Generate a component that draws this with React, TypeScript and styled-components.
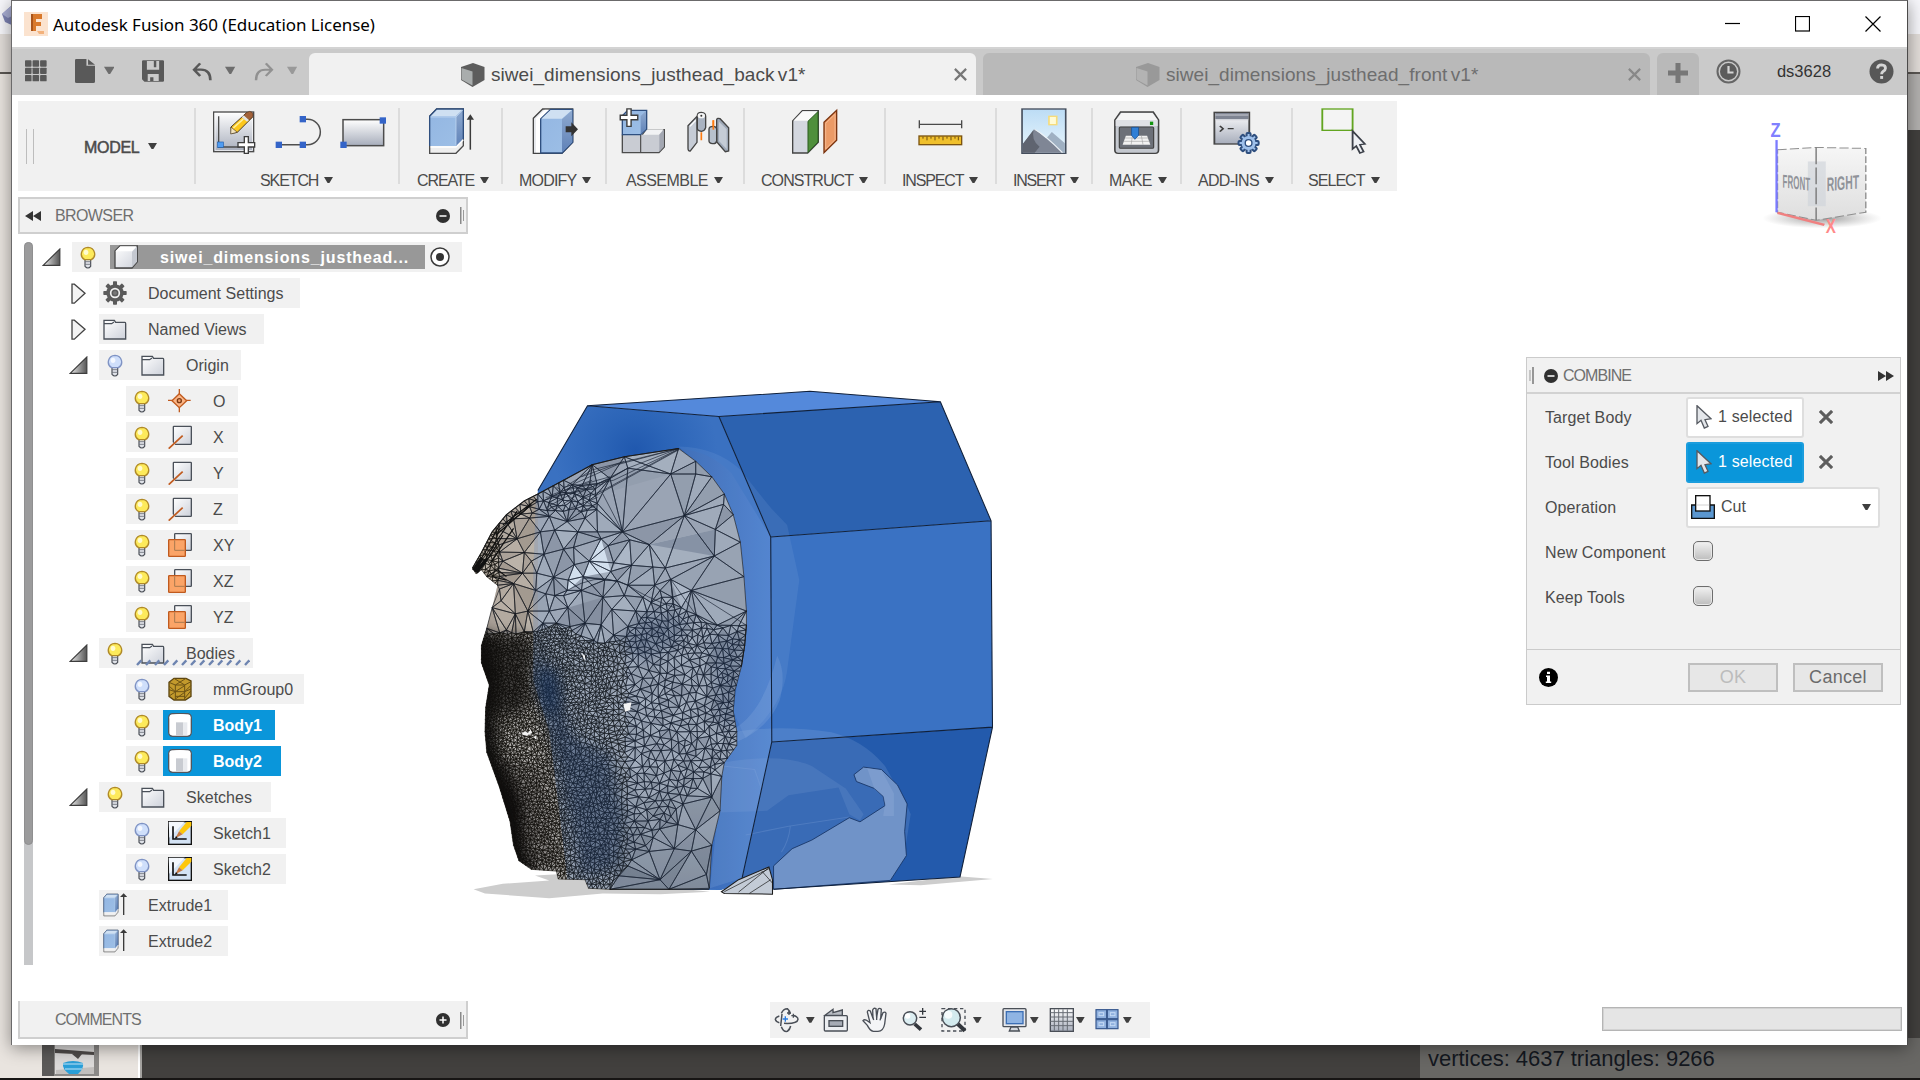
import React, { useMemo } from "react";
import styled, { createGlobalStyle, css } from "styled-components";

const Global = createGlobalStyle`
  * { box-sizing: border-box; }
  body { margin: 0; width: 1920px; height: 1080px; overflow: hidden;
    font-family: "Liberation Sans", Arial, sans-serif; font-size: 16px; color: #4b4b4b; }
  svg { display: block; flex: none; }
`;

/* ---------- desktop behind the window ---------- */
const Desktop = styled.div`
  position: relative; width: 1920px; height: 1080px; overflow: hidden;
  display: flex; flex-direction: column; background: #171514;
`;
const BackTitle = styled.div`
  height: 34px; background: #f7f7fb; padding: 6px 0 0 2px;
`;
const BackMenu = styled.div`height: 38px; background: #e2ddd9;`;
const BackRule = styled.div`height: 2px; background: #5c5854;`;
const BackBody = styled.div`height: 1004px; display: flex;`;
const BackSide = styled.div`
  width: 138px; background: #e9e4df; display: flex; flex-direction: column;
  justify-content: flex-end; padding-left: 41px;
`;
const BackDivider = styled.div`width: 4px; background: linear-gradient(90deg, #fff 50%, #a5a3a0 50%);`;
const BackView = styled.div`
  flex: 1; background: #42403e; display: flex; flex-direction: column; align-items: flex-end;
  justify-content: space-between;
`;
const BackStrip = styled.div`width: 100%; height: 56px; background: #b3b1af;`;
const Stats = styled.div`
  width: 500px; height: 40px; background: #686764; color: #14181f; padding: 9px 0 0 8px;
  font-size: 22px; line-height: 24px; letter-spacing: -0.02px; white-space: pre;
`;

/* ---------- window ---------- */
const Window = styled.div`
  position: absolute; left: 11px; top: 0; width: 1897px; height: 1045px; background: #fff;
  border: 1px solid #6b6a6b; border-bottom: 0; border-right-color: #4b4a4a;
  box-shadow: 0 3px 16px rgba(0, 0, 0, 0.42); display: flex; flex-direction: column;
`;
const TitleBar = styled.div`
  height: 46px; display: flex; align-items: center; padding: 0 26px 0 12px;
`;
const TitleText = styled.div`
  margin-left: 5px; flex: 1; font-family: "Noto Sans", "Open Sans", sans-serif; font-size: 17px;
  letter-spacing: -0.04px; color: #000; padding-top: 1px; white-space: pre;
`;
const Controls = styled.div`display: flex; gap: 55px;`;

const TabBar = styled.div`
  height: 48px; background: #cacaca; display: flex; align-items: flex-end;
  box-shadow: inset 0 2px 0 #d3d3d3;
`;
const QuickAccess = styled.div`
  width: 297px; height: 48px; display: flex; align-items: flex-start; padding: 12px 0 0 13px;
`;
const Shift = styled.div<{ $l: number }>`margin-left: ${(p) => p.$l}px;`;
const Tab = styled.div<{ $active?: boolean }>`
  width: 667px; height: 42px; border-radius: 6px 6px 0 0; display: flex; align-items: center;
  background: ${(p) => (p.$active ? "#f1f1f1" : "#b9b9b9")};
  color: ${(p) => (p.$active ? "#4b4b4b" : "#6e6e6e")};
  padding: 1px 9px 0 ${(p) => (p.$active ? 151 : 152)}px; margin-right: 7px;
`;
const TabTitle = styled.div`
  margin-left: 6px; flex: 1; font-size: 19px; letter-spacing: 0.05px; padding-top: 1px; white-space: pre;
  word-spacing: -2px;
`;
const NewTab = styled.div`
  width: 42px; height: 42px; border-radius: 6px 6px 0 0; background: #b9b9b9;
  display: grid; place-items: center; padding-bottom: 2px;
`;
const Account = styled.div`
  flex: 1; height: 48px; display: flex; align-items: center; padding: 0 13px 0 17px;
  justify-content: space-between; color: #333; font-size: 16.5px;
  span { margin-left: -2px; }
`;

const Ribbon = styled.div`
  width: 1379px; height: 90px; margin: 6px 0 0 6px; background: #f1f1f1; display: flex;
`;
const Workspace = styled.div`
  width: 176px; display: flex; align-items: flex-start; padding: 28px 0 0 8px;
`;
const Grip = styled.div`width: 8px; height: 35px; border: solid #bdbdbd; border-width: 0 1.5px;`;
const ModelLabel = styled.div`
  margin: 9px 9px 0 50px; -webkit-text-stroke: 0.5px #4b4b4b; letter-spacing: -0.3px; line-height: 20px;
`;
const ModelCaret = styled.div`margin-top: 14px;`;
const Group = styled.div<{ $w: number }>`
  width: ${(p) => p.$w}px; padding-top: 4px;
  background: linear-gradient(#dcdcdc, #dcdcdc) 0 7px / 2px 76px no-repeat;
`;
const IconRow = styled.div<{ $l: number; $gap?: number }>`
  height: 52px; padding-left: ${(p) => p.$l}px; display: flex; gap: ${(p) => p.$gap || 0}px;
`;
const GroupLabel = styled.div<{ $l: number; $sp: number }>`
  margin: 14px 0 0 ${(p) => p.$l}px; display: flex; align-items: center; gap: 6px;
  line-height: 20px; letter-spacing: ${(p) => p.$sp}px; white-space: pre;
  svg { margin-top: -3px; }
`;

const Canvas = styled.div`
  position: relative; height: 854px; display: flex; justify-content: space-between;
  padding: 6px 6px 0 6px;
`;
const ModelLayer = styled.div`position: absolute; left: 448px; top: 179px;`;
const CubeLayer = styled.div`position: absolute; left: 1748px; top: -71px; svg { overflow: visible; }`;

const Left = styled.div`width: 450px; display: flex; flex-direction: column;`;
const PanelBar = styled.div<{ $h: number; $open?: boolean }>`
  height: ${(p) => p.$h}px; background: #f1f1f1; border: 2px solid #cfcfcf; display: flex;
  align-items: center; padding: 0 2px 0 5px; color: #6f6f6f;
  ${(p) => p.$open && css`border-top: 0; padding-top: 2px;`}
`;
const PanelTitle = styled.div<{ $l: number; $sp: number }>`
  flex: 1; margin-left: ${(p) => p.$l}px; letter-spacing: ${(p) => p.$sp}px;
`;
const Handle = styled.div`
  width: 4px; height: 17px; margin-left: 10px;
  background: linear-gradient(#8a8a8a, #8a8a8a) 0 0 / 1.5px 17px no-repeat,
    linear-gradient(#9a9a9a, #9a9a9a) 3px 3px / 1px 11px no-repeat;
`;
const TreeArea = styled.div`height: 767px; display: flex; padding: 8px 0 0 6px;`;
const Track = styled.div`width: 9px; height: 723px; background: #c6c7c9; border-radius: 5px 5px 0 0;`;
const Thumb = styled.div`height: 603px; background: #9b9b9c; border-radius: 5px; border: 1px solid #8f8f90;`;
const Tree = styled.div`margin-left: 10px; display: flex; flex-direction: column; gap: 6px;`;
const Row = styled.div<{ $level: number }>`
  height: 30px; display: flex; align-items: center; padding-left: ${(p) => p.$level * 27}px;
`;
const Slot = styled.div`width: 29px; margin-left: -1px; padding-right: 1px; flex: none; box-sizing: content-box;`;
const Item = styled.div<{ $w: number }>`
  width: ${(p) => p.$w}px; height: 30px; background: #f1f1f1; display: flex; align-items: center;
`;
const BulbSlot = styled.div`width: 37px; padding-left: 8px;`;
const Entry = styled.div<{ $kind?: "blue" | "gray"; $pad: number }>`
  flex: 1; height: 30px; display: flex; align-items: center; gap: 21px; padding-left: ${(p) => p.$pad}px;
  white-space: pre; letter-spacing: 0.02px;
  span { padding-top: 1px; }
  ${(p) => p.$kind && css`color: #fff; font-weight: bold;`}
  ${(p) => p.$kind === "blue" && css`background: #0a96da;`}
  ${(p) => p.$kind === "gray" && css`
    background: #989898; height: 24px; flex: none; width: 315px; margin: 0 5px 0 1px; gap: 22px;
    letter-spacing: 0.86px;
  `}
`;
const Hatch = styled.div`
  position: absolute; left: 37px; top: 21px; width: 114px; height: 7px;
  svg { width: 114px; height: 7px; }
`;
const Marked = styled.div`position: relative;`;

const NavBar = styled.div`
  position: absolute; left: 758px; top: 811px; width: 380px; height: 36px; background: #f1f1f1;
  display: flex; padding-left: 4px;
`;
const Right = styled.div`width: 375px; display: flex; flex-direction: column; align-items: flex-end;`;
const Dialog = styled.div`
  width: 375px; height: 348px; margin-top: 160px; background: #f1f1f1; border: 1.5px solid #cbcbcb;
  display: flex; flex-direction: column;
`;
const DialogHead = styled.div`
  height: 36px; border-bottom: 2px solid #d2d2d2; display: flex; align-items: center; padding: 1px 6px 0 2px;
  color: #6f6f6f;
`;
const Form = styled.div`flex: 1; padding: 0 0 0 18px;`;
const Field = styled.div`height: 45px; display: flex; align-items: center; padding-top: 1px;`;
const FieldLabel = styled.div`width: 141px; white-space: pre; letter-spacing: 0.1px; padding-top: 1px;`;
const Picker = styled.div<{ $on?: boolean }>`
  width: 118px; height: 41px; margin-right: 15px; border: 2px solid ${(p) => (p.$on ? "#1b9ddd" : "#dedede")};
  border-radius: 3px; background: ${(p) => (p.$on ? "#0a96da" : "#fff")};
  color: ${(p) => (p.$on ? "#fff" : "#4b4b4b")};
  display: flex; align-items: center; padding-left: 8px; gap: 6px; white-space: pre; letter-spacing: 0.15px;
`;
const Select = styled.div`
  width: 194px; height: 41px; border: 2px solid #dedede; border-radius: 3px; background: #fff;
  display: flex; align-items: center; padding: 0 7px 0 3px;
`;
const SelectText = styled.div`flex: 1; margin-left: 6px;`;
const Check = styled.div`
  width: 20px; height: 20px; margin: -2px 0 0 7px; border: 1.5px solid #6d6d6d; border-radius: 5px;
  background: linear-gradient(#f2f2f2, #bdbdbd); box-shadow: inset 0 0 0 1px #e8e8e8;
`;
const DialogFoot = styled.div`
  height: 55px; border-top: 1.5px solid #cbcbcb; display: flex; align-items: center; padding: 0 17px 0 12px;
`;
const Button = styled.div<{ $off?: boolean }>`
  width: 90px; height: 29px; border: 2px solid #bfbfbf; background: #e7e7e7; display: grid; place-items: center;
  font-size: 18px; letter-spacing: 0.3px; line-height: 20px; color: ${(p) => (p.$off ? "#bcbcbc" : "#6b6b6b")};
`;
const FootGap = styled.div<{ $w: number }>`width: ${(p) => p.$w}px;`;
const Progress = styled.div`
  width: 300px; height: 24px; margin: 302px -1px 0 0; background: #e5e5e5; border: 1px solid #b5b5b5;
  box-shadow: inset 0 0 0 1px #d2d2d2;
`;

/* ---------- drawings ---------- */
type GProps = { x: number; y: number; w: number; h: number; k?: number; children: React.ReactNode };
/** A glyph whose artboard has k units per pixel across and 3 per pixel down. */
const Glyph = ({ x, y, w, h, k = 3, children }: GProps) => (
  <svg width={w / k} height={h / 3} viewBox={`${x} ${y} ${w} ${h}`} preserveAspectRatio="none">
    {children}
  </svg>
);

const Caret = ({ color = "#3f3f3f", w = 9, h = 6 }) => (
  <svg width={w} height={h} viewBox="0 0 10 7" preserveAspectRatio="none">
    <path d="M0 0H10L6 7H4Z" fill={color} />
  </svg>
);

const Defs = () => (
  <svg width="0" height="0" style={{ position: "absolute" }}>
    <defs>
      <linearGradient id="steel" x1="0" y1="0" x2="0" y2="1">
        <stop offset="0" stopColor="#fff" /><stop offset="1" stopColor="#a7adbb" />
      </linearGradient>
      <linearGradient id="light" x1="0" y1="0" x2="1" y2="1">
        <stop offset="0" stopColor="#fff" /><stop offset="1" stopColor="#cdd1da" />
      </linearGradient>
      <linearGradient id="blue" x1="0" y1="0" x2="1" y2="1">
        <stop offset="0" stopColor="#93b6e2" /><stop offset="1" stopColor="#9dbfe6" />
      </linearGradient>
      <linearGradient id="side" x1="0" y1="0" x2="0" y2="1">
        <stop offset="0" stopColor="#8faad0" /><stop offset="1" stopColor="#5f82b8" />
      </linearGradient>
      <linearGradient id="tri" x1="0" y1="0" x2="1" y2="0">
        <stop offset="0" stopColor="#eee" /><stop offset="1" stopColor="#555" />
      </linearGradient>
      <linearGradient id="sky" x1="0" y1="0" x2="0" y2="1">
        <stop offset="0" stopColor="#bcdcf5" /><stop offset="1" stopColor="#e9f6fd" />
      </linearGradient>
    </defs>
  </svg>
);

const Pane = ({ faded }: { faded?: boolean }) => (
  <svg width="25" height="24" viewBox="0 0 25 24">
    <path d="M1 4L13 0 24.500 4V17L12.500 24 1 17Z" fill={faded ? "#999" : "#5d5d5d"} />
    <path d="M1.500 5L12.500 8.500V22.500L1.500 16.500Z" fill={faded ? "#b3b3b3" : "#a9adad"} />
  </svg>
);
const Close = ({ s = 13, c = "#777", w = 2 }) => (
  <svg width={s} height={s} viewBox="0 0 12 12">
    <path d="M.8.8L11.2 11.2M11.2.8L.8 11.2" stroke={c} strokeWidth={w} fill="none" />
  </svg>
);

const QuickIcons = () => {
  const c = "#595959";
  return (
    <QuickAccess>
      <Glyph k={2.45} x={62} y={177} w={53} h={73}>
        {[0, 1, 2].map((r) => [0, 1, 2].map((q) => (
          <rect key={`${r}${q}`} x={62 + q * 18.5} y={181 + r * 22} width="16" height="19" rx="2" fill={c} />
        )))}
      </Glyph>
      <Shift $l={28}>
        <Glyph k={2.45} x={183} y={177} w={50} h={73}>
          <path d="M186 177H211V197H232V245Q232 249 228 249H187Q183 249 183 245V181Q183 177 186 177ZM215 178L232 194H215Z" fill={c} />
        </Glyph>
      </Shift>
      <Shift $l={8.5}><Glyph k={2.45} x={254} y={177} w={26} h={73}><path d="M254 200H280L269 222H265Z" fill="#6d6d6d" /></Glyph></Shift>
      <Shift $l={27.5}>
        <Glyph k={2.45} x={348} y={177} w={54} h={73}>
          <path fillRule="evenodd" d="M351 181H399Q402 181 402 184V242Q402 245 399 245H354L348 238V184Q348 181 351 181ZM360 183V209H390V183H383V202H377V183ZM362 222V243H368V232H376V243H389V222Z" fill={c} />
        </Glyph>
      </Shift>
      <Shift $l={28}>
        <Glyph k={2.45} x={470} y={177} w={50} h={73}>
          <path d="M490 190L475 209L490 228M476 209H492Q515 209 515 241" fill="none" stroke={c} strokeWidth="6.5" />
        </Glyph>
      </Shift>
      <Shift $l={13}><Glyph k={2.45} x={552} y={177} w={26} h={73}><path d="M552 200H577L567 222H563Z" fill="#6d6d6d" /></Glyph></Shift>
      <Shift $l={18.5}>
        <Glyph k={2.45} x={623} y={177} w={50} h={73}>
          <path d="M652 190L667 209L652 228M667 209H650Q628 209 628 241" fill="none" stroke="#919191" strokeWidth="6" />
        </Glyph>
      </Shift>
      <Shift $l={12}><Glyph k={2.45} x={702} y={177} w={26} h={73}><path d="M702 200H727L717 222H713Z" fill="#999" /></Glyph></Shift>
    </QuickAccess>
  );
};

const plus = (x: number, y: number, s = 1) => (
  <path transform={`translate(${x} ${y}) scale(${s})`} d="M-6-25H6V-7H25V6H6V25H-6V6H-25V-7H-6Z" fill="#fff" stroke="#3d3d3d" strokeWidth="4" />
);
const sq = (x: number, y: number) => <rect x={x - 9} y={y - 9} width="19" height="19" fill="#3464c8" />;

const SketchIcon = () => (
  <Glyph x={96} y={30} w={134} h={156}>
    <rect x="101" y="51" width="120" height="119" fill="url(#steel)" stroke="#4c4c4c" strokeWidth="4" />
    <rect x="105" y="55" width="112" height="111" fill="none" stroke="#fff" strokeWidth="2" />
    <path d="M116 64V156H180" fill="none" stroke="#4c4c4c" strokeWidth="4" />
    <rect x="113" y="141" width="17" height="16" fill="#4f9cf2" stroke="#1f5fb0" strokeWidth="2" />
    <path d="M153 96L200 53L217 67L172 112L154 115Z" fill="#fdc81c" stroke="#4c3a20" strokeWidth="3" />
    <path d="M200 53Q210 46 216 52Q222 60 217 67L207 75L191 61Z" fill="#a3623a" stroke="#5b3a24" strokeWidth="2" />
    <path d="M191 61L207 75L201 80L185 67Z" fill="#e3e3e3" />
    <path d="M153 96L172 112L152 117Z" fill="#f1e2bd" stroke="#4c3a20" strokeWidth="2" />
    <path d="M160 99L190 72" stroke="#fff0a0" strokeWidth="5" />
    {plus(199, 150)}
  </Glyph>
);
const ArcIcon = () => (
  <Glyph x={286} y={30} w={142} h={156}>
    <path d="M297 149H384A38 38 0 0 0 384 73H370" fill="none" stroke="#4f4f4f" strokeWidth="4.5" />
    {sq(297, 149)}{sq(369, 149)}{sq(369, 72)}
  </Glyph>
);
const RectIcon = () => (
  <Glyph x={480} y={30} w={138} h={156}>
    <rect x="489" y="74" width="122" height="78" fill="url(#steel)" stroke="#4c4c4c" strokeWidth="4.5" />
    {sq(490, 149)}{sq(608, 76)}
  </Glyph>
);
const ExtrudeShape = () => (
  <>
    <path d="M749 64L770 42H850V152L828 175H749Z" fill="#eee" stroke="#4c4c4c" strokeWidth="4" />
    <path d="M749 64L770 42H850V130L828 153H749Z" fill="url(#blue)" />
    <path d="M749 64L770 42H850L828 64Z" fill="#cfe0f2" />
    <path d="M828 64L850 42V132L828 155Z" fill="url(#side)" />
    <path d="M752 156H828L850 134" fill="none" stroke="#fff" strokeWidth="4" />
    <path d="M749 153V64L770 42H850V132" fill="none" stroke="#2f4f7f" strokeWidth="4" />
    <path d="M752 66H828V150M828 66L848 45" fill="none" stroke="#bfd6f0" strokeWidth="2.5" />
  </>
);
const CreateIcon = () => (
  <Glyph x={744} y={30} w={142} h={156}>
    <ExtrudeShape />
    <path d="M871 164V64" stroke="#3b3b3b" strokeWidth="4.5" />
    <path d="M860 74L871 58L882 74Z" fill="#3b3b3b" />
  </Glyph>
);
const ModifyIcon = () => (
  <Glyph x={1056} y={30} w={144} h={156}>
    <path d="M1060 70L1088 42H1178V142L1146 175H1060Z" fill="#e8eaee" stroke="#444" strokeWidth="4" />
    <path d="M1068 70V172H1080V72L1106 44H1094Z" fill="#fff" />
    <path d="M1082 72L1112 43H1178V142L1146 174H1082Z" fill="url(#blue)" stroke="#2f4f7f" strokeWidth="4" />
    <path d="M1084 71L1112 45H1176L1146 71Z" fill="#cfe0f2" />
    <path d="M1146 73L1177 45V141L1146 172Z" fill="url(#side)" />
    <path d="M1157 94H1174V82L1194 103L1174 124V112H1157Z" fill="#333" />
  </Glyph>
);
const ComponentIcon = () => (
  <Glyph x={116} y={30} w={142} h={156}>
    <path d="M126 120L140 104H252V156L236 173H126Z" fill="#c9ccd3" stroke="#4c4c4c" strokeWidth="4" />
    <path d="M181 121L199 103H250L236 119H183Z" fill="#f1f2f4" />
    <path d="M237 119L250 104V156L237 170Z" fill="#a3a7b2" />
    <path d="M181 120V172M186 119L199 102" stroke="#4c4c4c" strokeWidth="3.5" />
    <path d="M126 62L142 46H199V102L181 119H126Z" fill="url(#blue)" stroke="#2f4f7f" strokeWidth="4" />
    <path d="M181 63L197 48V101L181 117Z" fill="url(#side)" />
    {plus(146, 68, 1.05)}
  </Glyph>
);
const JointIcon = () => (
  <Glyph x={318} y={30} w={134} h={156}>
    <path d="M324 92L351 64V142L331 168Q324 169 324 160Z" fill="#c6ccd6" stroke="#444" strokeWidth="4" />
    <path d="M352 62Q352 52 364 52Q377 53 377 64V98Q374 108 364 109Q352 108 352 100Z" fill="#aab3c1" stroke="#444" strokeWidth="4" />
    <ellipse cx="364" cy="62" rx="11" ry="8" fill="#f5f5f5" /><circle cx="364" cy="62" r="3" fill="#333" />
    <path d="M330 94L347 76" stroke="#fff" strokeWidth="4" />
    <path d="M364 112V136M400 76V104" stroke="#ff7b10" strokeWidth="5" />
    <path d="M410 74Q412 68 420 71L446 98V168L436 170L410 140Z" fill="#9fa9b8" stroke="#444" strokeWidth="4" />
    <path d="M417 80L440 103V162L417 138Z" fill="#c5ccd6" />
    <path d="M387 102Q388 94 399 94Q410 95 410 103V138Q408 147 398 146Q387 145 387 138Z" fill="#b8c1cd" stroke="#444" strokeWidth="4" />
    <path d="M400 76V104" stroke="#ff7b10" strokeWidth="5" />
  </Glyph>
);
const ConstructIcon = () => (
  <Glyph x={634} y={30} w={142} h={156}>
    <path d="M639 78L668 47H716V142L684 174H639Z" fill="#d3d7df" stroke="#444" strokeWidth="4" />
    <path d="M641 77L669 49H714L685 77Z" fill="#fafafa" />
    <path d="M685 79L715 50V141L685 172Z" fill="#4f8f3c" stroke="#2c5e20" strokeWidth="3" />
    <path d="M733 82L771 46V136L733 173Z" fill="#eb9a66" stroke="#7b3410" strokeWidth="4" />
    <path d="M738 85L766 58V134L738 162Z" fill="none" stroke="#f6bd96" strokeWidth="2.5" />
  </Glyph>
);
const InspectIcon = () => (
  <Glyph x={1010} y={30} w={142} h={156}>
    <path d="M1017 76V100M1144 76V100M1017 88H1144" stroke="#4a4a4a" strokeWidth="4" />
    <rect x="1016" y="123" width="128" height="26" fill="#f0c02c" stroke="#7c5410" strokeWidth="4" />
    {[1028, 1040, 1052, 1064, 1076, 1088, 1100, 1112, 1124, 1134].map((v, i) => (
      <path key={v} d={`M${v} 125V${i % 2 ? 136 : 131}`} stroke="#6e4c10" strokeWidth="3" />
    ))}
  </Glyph>
);
const InsertIcon = () => (
  <Glyph k={2.45} x={1030} y={315} w={118} h={156}>
    <rect x="1035" y="327" width="107" height="133" fill="url(#sky)" stroke="#444d5c" strokeWidth="4" />
    <rect x="1101" y="349" width="19" height="25" fill="#fffbd6" stroke="#f7dc7a" strokeWidth="4" />
    <path d="M1084 430L1108 396L1140 430V458H1084Z" fill="#9fb0c2" />
    <path d="M1037 432L1066 388Q1078 398 1134 458H1037Z" fill="#7f8695" />
    <path d="M1037 432L1064 388Q1056 420 1078 440L1066 458H1037Z" fill="#5f6470" />
    <path d="M1066 388Q1092 405 1134 458" stroke="#eef2f6" strokeWidth="3" fill="none" />
  </Glyph>
);
const MakeIcon = () => (
  <Glyph k={2.45} x={1256} y={315} w={120} h={156}>
    <path d="M1263 360L1277 336H1357L1370 360V450Q1370 460 1362 460H1271Q1263 460 1263 450Z" fill="#c4c8cf" stroke="#444" strokeWidth="4" />
    <path d="M1266 360L1279 339H1355L1368 360Z" fill="#f5f5f5" />
    <rect x="1265" y="360" width="103" height="18" fill="#dfe1e5" />
    <rect x="1349" y="365" width="8" height="10" fill="#12940f" />
    <rect x="1274" y="381" width="84" height="64" rx="3" fill="#6c7078" stroke="#444" strokeWidth="3" />
    <path d="M1290 407H1342L1350 434H1282Z" fill="#f2f2f2" /><path d="M1288 414H1345M1285 424H1348M1306 407L1303 434M1328 407L1332 434" stroke="#999" strokeWidth="1.5" />
    <path d="M1304 382H1321V406L1312 418L1304 406Z" fill="#2f7fd6" stroke="#184f93" strokeWidth="2" />
  </Glyph>
);
const AddinsIcon = () => (
  <Glyph k={2.178} x={28} y={315} w={104} h={156}>
    <rect x="31" y="337" width="76" height="95" fill="url(#steel)" stroke="#454545" strokeWidth="4" />
    <rect x="33" y="339" width="72" height="18" fill="#7e8492" /><path d="M33 345H105M33 359H105" stroke="#c9ccd4" strokeWidth="3" />
    <path d="M43 378L50 386L43 395M60 386H73" stroke="#3d3d3d" strokeWidth="4" fill="none" />
    <g transform="translate(105.500 429) scale(.73 1)">
      {[0, 45, 90, 135].map((a) => <rect key={a} x="-6" y="-30" width="12" height="60" rx="3" transform={`rotate(${a})`} fill="#9fc0ea" stroke="#2f4f7f" strokeWidth="6" />)}
      <circle r="21" fill="#9fc0ea" /><circle r="10" fill="#fff" stroke="#2f4f7f" strokeWidth="4" />
    </g>
  </Glyph>
);
const SelectIcon = () => (
  <Glyph k={2.178} x={262} y={315} w={104} h={156}>
    <rect x="267" y="327" width="66" height="64" fill="#f4f4f4" stroke="#62a520" strokeWidth="4" />
    <path d="M333 393V447L341 438L349 459L357 455L349 434L360 432Z" fill="#eef0f4" stroke="#3b3f48" strokeWidth="4" />
  </Glyph>
);

type G = { label: string; w: number; il: number; ll: number; sp: number; gap?: number; icons: React.ReactNode };
const groups: G[] = [
  { label: "SKETCH", w: 204, il: 18, ll: 66, sp: -1.1, gap: 18, icons: <><SketchIcon /><ArcIcon /><RectIcon /></> },
  { label: "CREATE", w: 103, il: 30, ll: 19, sp: -1.1, icons: <CreateIcon /> },
  { label: "MODIFY", w: 104, il: 31, ll: 18, sp: -0.8, icons: <ModifyIcon /> },
  { label: "ASSEMBLE", w: 138, il: 14, ll: 21, sp: -0.55, gap: 20, icons: <><ComponentIcon /><JointIcon /></> },
  { label: "CONSTRUCT", w: 141, il: 48, ll: 18, sp: -0.93, icons: <ConstructIcon /> },
  { label: "INSPECT", w: 111, il: 33, ll: 18, sp: -1.15, icons: <InspectIcon /> },
  { label: "INSERT", w: 96, il: 25, ll: 18, sp: -1.2, icons: <InsertIcon /> },
  { label: "MAKE", w: 89, il: 21, ll: 18, sp: -0.6, icons: <MakeIcon /> },
  { label: "ADD-INS", w: 111, il: 33, ll: 18, sp: -0.7, icons: <AddinsIcon /> },
  { label: "SELECT", w: 106, il: 29, ll: 17, sp: -0.95, icons: <SelectIcon /> },
];

/* ---------- tree icons ---------- */
const Bulb = ({ on }: { on: boolean }) => (
  <Glyph x={240} y={164} w={48} h={72}>
    <path d="M255 205H272V228Q264 238 255 228Z" fill="#dfe2e8" stroke="#4c5058" strokeWidth="3.5" />
    <path d="M255 214H272M255 222H272" stroke="#6c7078" strokeWidth="2.5" />
    <path d="M264 171A21 20 0 0 1 274 208H254A21 20 0 0 1 264 171Z" fill={on ? "#fdea5b" : "#cfdffb"} stroke={on ? "#b08a28" : "#7f93c4"} strokeWidth="4" />
    <ellipse cx="258" cy="186" rx="7" ry="8" fill={on ? "#fffbd0" : "#f4f8ff"} />
  </Glyph>
);
const I = ({ children }: { children: React.ReactNode }) => <svg width="24" height="24" viewBox="0 0 72 72">{children}</svg>;
const icons: Record<string, React.ReactNode> = {
  cube: <I><path d="M3 18L18 3H70V50L54 69H3Z" fill="url(#light)" stroke="#4a4a4a" strokeWidth="4" /><path d="M54 20L69 5V50L54 67Z" fill="#c4c8d0" /><path d="M4 19L19 4H68L54 19Z" fill="#fff" /></I>,
  gear: <I><g transform="translate(36 36)">{[0, 45, 90, 135].map((a) => <rect key={a} x="-6" y="-35" width="12" height="70" rx="2" transform={`rotate(${a})`} fill="#5a5a5a" />)}<circle r="26" fill="#5a5a5a" /><circle r="13" fill="#5a5a5a" stroke="#f1f1f1" strokeWidth="5" /><circle r="6" fill="#777" /></g></I>,
  folder: <I><path d="M3 10H34L38 16H66Q68 16 68 20V66H3Z" fill="url(#light)" stroke="#4a5059" strokeWidth="4" /><path d="M3 20H26L33 15" stroke="#4a5059" strokeWidth="3.500" fill="none" /></I>,
  point: <I><path d="M34 0V70M0 34H68" stroke="#c05a1e" strokeWidth="4" /><path d="M34 14L56 35L34 56L12 35Z" fill="#fbb586" stroke="#c05a1e" strokeWidth="4" /><circle cx="34" cy="35" r="6" fill="#f6a06a" stroke="#7c3a14" strokeWidth="4" /></I>,
  axis: <I><rect x="16" y="4" width="54" height="54" rx="2" fill="url(#light)" stroke="#4a5059" strokeWidth="4" /><path d="M2 70L18 55" stroke="#f1f1f1" strokeWidth="11" /><path d="M2 71L44 32" stroke="#c05a1e" strokeWidth="5" /></I>,
  plane: <I><rect x="20" y="2" width="50" height="50" rx="2" fill="url(#light)" stroke="#4a5059" strokeWidth="4" /><rect x="2" y="20" width="50" height="50" rx="2" fill="#fba467" stroke="#c05a1e" strokeWidth="4" /><path d="M20 22V52H50" stroke="#a8794f" strokeWidth="3" fill="none" /></I>,
  mesh: <I><path d="M3 16L18 4H54L69 12V58L52 69H18L3 58Z" fill="#c39a2c" stroke="#5c4510" strokeWidth="4" /><path d="M3 16L22 24H50L69 14M22 24V68M50 24V68M3 38L22 44H50L69 36M22 58H50M4 28L22 44M22 44L50 26M50 44L68 26M22 66L50 46M5 56L20 46M50 64L68 42M18 4L50 24M54 4L22 24" stroke="#6c5214" strokeWidth="3" fill="none" /></I>,
  body: <I><rect x="2" y="2" width="68" height="68" rx="12" fill="#fff" stroke="#53565c" strokeWidth="4" /><path d="M24 28H46V68H24Z" fill="#c8cbd1" /><path d="M46 28H58V66H46Z" fill="#e8eaee" /><path d="M4 14Q10 24 24 26H48Q62 24 68 14Q60 3 36 3T4 14Z" fill="#fff" /></I>,
  sketch: <I><rect x="2" y="2" width="68" height="68" fill="#d4e3f5" stroke="#111" strokeWidth="4" /><path d="M2 2H50L4 50Z" fill="#f4f8fd" /><path d="M15 16V54H56" fill="none" stroke="#111" strokeWidth="5" /><path d="M56 3H70V14L44 40L33 31Z" fill="#fdc70c" /><path d="M33 31L44 40L22 52Z" fill="#c57a45" /><path d="M20 54L24 45L29 50Z" fill="#111" /></I>,
  extrude: <svg width="24" height="24" viewBox="0 0 72 72"><g transform="translate(-316 -17) scale(.425 .49)"><ExtrudeShape /></g><path d="M62 66V6" stroke="#3b3b3b" strokeWidth="4" /><path d="M51 12L62 1L73 12Z" fill="#3b3b3b" /></svg>,
};
const Open = () => (
  <svg width="19" height="18" viewBox="0 0 56 54"><path d="M3 52L53 3V52Z" fill="url(#tri)" stroke="#3d3d3d" strokeWidth="3.500" /></svg>
);
const Shut = () => (
  <Shift $l={2}><svg width="15" height="21" viewBox="0 0 45 62"><path d="M3 3H10L42 30L10 60H3Z" fill="#f3f3f3" stroke="#444" strokeWidth="4" /></svg></Shift>
);

type Node = { l: number; t?: "open" | "shut"; bulb?: boolean; icon: string; text: string; w: number; kind?: "blue" | "gray"; hatch?: boolean };
const nodes: Node[] = [
  { l: 0, t: "open", bulb: true, icon: "cube", text: "siwei_dimensions_justhead...", w: 390, kind: "gray" },
  { l: 1, t: "shut", icon: "gear", text: "Document Settings", w: 201 },
  { l: 1, t: "shut", icon: "folder", text: "Named Views", w: 165 },
  { l: 1, t: "open", bulb: false, icon: "folder", text: "Origin", w: 142 },
  { l: 2, bulb: true, icon: "point", text: "O", w: 112 },
  { l: 2, bulb: true, icon: "axis", text: "X", w: 112 },
  { l: 2, bulb: true, icon: "axis", text: "Y", w: 112 },
  { l: 2, bulb: true, icon: "axis", text: "Z", w: 112 },
  { l: 2, bulb: true, icon: "plane", text: "XY", w: 124 },
  { l: 2, bulb: true, icon: "plane", text: "XZ", w: 124 },
  { l: 2, bulb: true, icon: "plane", text: "YZ", w: 124 },
  { l: 1, t: "open", bulb: true, icon: "folder", text: "Bodies", w: 154, hatch: true },
  { l: 2, bulb: false, icon: "mesh", text: "mmGroup0", w: 178 },
  { l: 2, bulb: true, icon: "body", text: "Body1", w: 149, kind: "blue" },
  { l: 2, bulb: true, icon: "body", text: "Body2", w: 155, kind: "blue" },
  { l: 1, t: "open", bulb: true, icon: "folder", text: "Sketches", w: 172 },
  { l: 2, bulb: false, icon: "sketch", text: "Sketch1", w: 160 },
  { l: 2, bulb: false, icon: "sketch", text: "Sketch2", w: 160 },
  { l: 1, icon: "extrude", text: "Extrude1", w: 129 },
  { l: 1, icon: "extrude", text: "Extrude2", w: 129 },
];

const TreeRow = ({ n }: { n: Node }) => (
  <Row $level={n.l}>
    <Slot>{n.t === "open" ? <Open /> : n.t === "shut" ? <Shut /> : null}</Slot>
    <Marked>
      <Item $w={n.w}>
        {n.bulb !== undefined && <BulbSlot><Bulb on={n.bulb} /></BulbSlot>}
        <Entry $kind={n.kind} $pad={n.bulb === undefined ? 4 : n.kind === "gray" ? 4 : 5}>
          {icons[n.icon]}
          <span>{n.text}</span>
        </Entry>
        {n.kind === "gray" && (
          <svg width="27" height="20" viewBox="0 0 27 20"><circle cx="10" cy="10" r="9" fill="#fff" stroke="#3a3a3a" strokeWidth="1.500" /><circle cx="10" cy="10" r="4" fill="#333" /></svg>
        )}
      </Item>
      {n.hatch && (
        <Hatch>
          <svg viewBox="0 0 342 21">
            {Array.from({ length: 13 }, (_, i) => <path key={i} d={`M${3 + i * 27} 18L${16 + i * 27} 4`} stroke="#6d84b0" strokeWidth="7" />)}
          </svg>
        </Hatch>
      )}
    </Marked>
  </Row>
);

/* ---------- triangulated head ---------- */
type P = [number, number];
const head: P[] = [
  [35, 575], [60, 530], [90, 470], [130, 420], [180, 380], [218, 360], [290, 320], [370, 275], [460, 252], [612, 228],
  [660, 265], [705, 310], [740, 360], [765, 420], [785, 500], [795, 600], [802, 700], [802, 740], [797, 800], [788, 860],
  [770, 930], [765, 990], [775, 1050], [775, 1090], [740, 1140], [733, 1180], [728, 1280], [705, 1380], [698, 1505],
  [585, 1508], [420, 1508], [360, 1505], [350, 1480], [275, 1478], [270, 1455], [200, 1450], [165, 1425], [150, 1380], [140, 1310],
  [110, 1210], [75, 1110], [70, 1050], [72, 980], [82, 915], [60, 850], [60, 800], [75, 750], [90, 690], [105, 625],
  [75, 600], [60, 580], [45, 592],
];
/* vertices of the large facets on the scalp, brow and neck */
const landmarks: P[] = [
  [590, 302], [660, 302], [628, 423], [738, 390], [715, 463], [712, 540], [648, 640], [590, 608], [620, 690], [675, 732],
  [575, 575], [530, 507], [475, 493], [455, 470], [385, 470], [380, 365], [383, 405], [480, 567], [540, 572], [415, 510],
  [422, 585], [395, 490], [362, 555], [345, 600], [320, 565], [303, 610], [300, 640], [290, 520], [265, 465], [250, 425],
  [330, 470], [318, 515], [235, 535], [215, 590], [262, 602], [470, 625], [405, 610], [400, 660], [425, 695], [395, 740],
  [375, 785], [302, 690], [308, 745], [270, 735], [460, 655], [492, 700], [512, 660], [545, 625], [535, 675], [470, 745],
  [240, 650], [212, 640], [232, 735], [250, 700], [160, 490], [120, 555], [180, 530], [150, 620], [175, 590], [200, 555],
  [115, 670], [155, 708], [190, 700], [130, 755], [180, 760], [205, 760], [470, 285], [420, 315], [595, 660], [560, 640],
  [340, 640], [370, 625], [440, 612], [290, 655], [265, 655], [225, 470], [195, 430], [350, 430],
  [300, 440], [430, 560], [565, 660], [350, 735], [430, 770],
  [665, 1215], [660, 1335], [648, 1397], [530, 1398], [690, 1465], [470, 1440], [600, 1390], [610, 1320], [560, 1480], [705, 1240],
];
const inside = (x: number, y: number, poly: P[]) => {
  let c = false;
  for (let i = 0, j = poly.length - 1; i < poly.length; j = i++) {
    const [a, b] = poly[i], [d, e] = poly[j];
    if (b > y !== e > y && x < ((d - a) * (y - b)) / (e - b) + a) c = !c;
  }
  return c;
};
const browLine: P[] = [[0, 765], [205, 762], [260, 740], [310, 752], [370, 792], [450, 782], [490, 738], [530, 692], [575, 668], [650, 702], [700, 738], [900, 748]];
const brow = (x: number) => {
  for (let i = 1; i < browLine.length; i++) {
    const [a, b] = browLine[i - 1], [c, d] = browLine[i];
    if (x <= c) return b + ((d - b) * (x - a)) / (c - a);
  }
  return 748;
};
const BARE = 1000;
const spacing = (x: number, y: number) => {
  if (y < brow(x)) {
    if (x < 112 && y < 640) return 11;
    if (y < 640 && x < 230 && y < 440 + (150 - x) * 0.4) return 16;
    if (x >= 218 && x < 385 && y < 412 && y > 330) return 15;
    return BARE;
  }
  if (y - 1120 > (750 - x) * 1.15) return BARE;
  if (x < 120 + (y > 1000 ? (y - 1000) * 0.12 : 0)) return 6.6;
  if (x < 300) return 8;
  if (x < 420) return 9.5;
  if (x < 470) return 12;
  return y < 830 || x > 700 ? 15 : 19;
};
const delaunay = (pts: P[]) => {
  const n = pts.length;
  const all = [...pts, [-9000, -6000], [9000, -6000], [400, 14000]] as P[];
  const circ = (i: number, j: number, k: number) => {
    const [ax, ay] = all[i], [bx, by] = all[j], [cx, cy] = all[k];
    const d = 2 * (ax * (by - cy) + bx * (cy - ay) + cx * (ay - by)) || 1e-9;
    const A = ax * ax + ay * ay, B = bx * bx + by * by, C = cx * cx + cy * cy;
    const x = (A * (by - cy) + B * (cy - ay) + C * (ay - by)) / d;
    const y = (A * (cx - bx) + B * (ax - cx) + C * (bx - ax)) / d;
    return { i, j, k, x, y, r: (ax - x) ** 2 + (ay - y) ** 2 };
  };
  let open = [circ(n, n + 1, n + 2)];
  const done: typeof open = [];
  for (let p = 0; p < n; p++) {
    const [px, py] = pts[p];
    const edges = new Map<string, [number, number] | null>();
    const keep: typeof open = [];
    for (const t of open) {
      const dx = px - t.x;
      if (dx > 0 && dx * dx > t.r) { done.push(t); continue; }
      if (dx * dx + (py - t.y) ** 2 > t.r) { keep.push(t); continue; }
      for (const [a, b] of [[t.i, t.j], [t.j, t.k], [t.k, t.i]]) {
        const key = a < b ? `${a},${b}` : `${b},${a}`;
        edges.set(key, edges.has(key) ? null : [a, b]);
      }
    }
    edges.forEach((e) => e && keep.push(circ(e[0], e[1], p)));
    open = keep;
  }
  return [...done, ...open].filter((t) => t.i < n && t.j < n && t.k < n);
};
const shades = ["#a09e9c", "#a9a7a5", "#b0aeac", "#b4b2b0", "#b9b7b5", "#bfbdbb"];

const buildMesh = () => {
  let s = 7;
  const rnd = () => { s = (s * 16807) % 2147483647; return s / 2147483647; };
  const cells = new Map<number, P[]>();
  const C = 20;
  const pts: P[] = [];
  const add = (p: P) => {
    pts.push(p);
    const k = Math.floor(p[0] / C) * 1000 + Math.floor(p[1] / C);
    const c = cells.get(k);
    if (c) c.push(p); else cells.set(k, [p]);
  };
  head.forEach((a, i) => {
    const b = head[(i + 1) % head.length];
    const len = Math.hypot(b[0] - a[0], b[1] - a[1]);
    const r = spacing((a[0] + b[0]) / 2 + (a[0] < 300 ? 8 : -8), (a[1] + b[1]) / 2);
    const m = Math.max(1, Math.round(len / Math.max(11, r)));
    for (let q = 0; q < m; q++) add([a[0] + ((b[0] - a[0]) * q) / m + rnd() * 0.01, a[1] + ((b[1] - a[1]) * q) / m + rnd() * 0.01]);
  });
  landmarks.forEach(([x, y]) => add([x + rnd() * 0.01, y + rnd() * 0.01]));
  for (let t = 0; t < 90000; t++) {
    const x = 35 + rnd() * 770, y = 228 + rnd() * 1280;
    const r = spacing(x, y);
    if (r === BARE || !inside(x, y, head)) continue;
    const m = Math.ceil(r / C);
    const cx = Math.floor(x / C), cy = Math.floor(y / C);
    let ok = true;
    for (let i = -m; i <= m && ok; i++)
      for (let j = -m; j <= m && ok; j++)
        for (const p of cells.get((cx + i) * 1000 + cy + j) || [])
          if ((p[0] - x) ** 2 + (p[1] - y) ** 2 < r * r) { ok = false; break; }
    if (ok) add([x, y]);
  }
  pts.sort((a, b) => a[0] - b[0]);
  const fills = shades.map(() => "");
  let coarse = "", fine = "";
  for (const t of delaunay(pts)) {
    const a = pts[t.i], b = pts[t.j], c = pts[t.k];
    const mx = (a[0] + b[0] + c[0]) / 3, my = (a[1] + b[1] + c[1]) / 3;
    if (!inside(mx, my, head)) continue;
    const d = `M${a[0].toFixed(1)} ${a[1].toFixed(1)}L${b[0].toFixed(1)} ${b[1].toFixed(1)} ${c[0].toFixed(1)} ${c[1].toFixed(1)}Z`;
    fills[Math.floor(rnd() * shades.length)] += d;
    if (spacing(mx, my) > 12) coarse += d; else fine += d;
  }
  return { fills, coarse, fine };
};

const Edge = { fill: "none", stroke: "#10203a", strokeWidth: 3 };
const Model = () => {
  const mesh = useMemo(buildMesh, []);
  const outline = "M" + head.map((p) => p.join(" ")).join("L") + "Z";
  return (
    <svg width="560" height="540" viewBox="0 0 1568 1568" preserveAspectRatio="none">
      <defs>
        <radialGradient id="dome" gradientUnits="userSpaceOnUse" cx="490" cy="235" r="230">
          <stop offset="0" stopColor="#2058ae" /><stop offset=".4" stopColor="#2b64b7" /><stop offset="1" stopColor="#3a71c1" />
        </radialGradient>
        <linearGradient id="rim" x1="0" y1="0" x2="1" y2="0">
          <stop offset="0" stopColor="#3465b2" /><stop offset="1" stopColor="#4a7ecd" />
        </linearGradient>
        <linearGradient id="neck" x1="0" y1="0" x2="0" y2="1">
          <stop offset="0" stopColor="#222" stopOpacity="0" /><stop offset="1" stopColor="#222" stopOpacity=".28" />
        </linearGradient>
        <filter id="soft" x="-30%" y="-30%" width="160%" height="160%" colorInterpolationFilters="sRGB"><feGaussianBlur stdDeviation="18" /></filter>
        <clipPath id="headClip"><path d={outline} /></clipPath>
      </defs>
      <path d="M38 1508L120 1492 250 1482 210 1468 275 1464 560 1500 700 1515 560 1522 400 1520 250 1534 70 1520Z" fill="#cdcdcd" />
      <path d="M1395 1470L1492 1478 1290 1496 1200 1494Z" fill="#cdcdcd" />
      <path d="M357 104L725 135 870 485 873 1080 790 1475 732 1510 420 1508 302 1460 280 1300 250 1050 205 900 205 600 218 350Z" fill="url(#dome)" />
      <path d="M612 228Q700 235 760 300L870 485 873 1080 790 1475 740 1508H698L705 1380 735 1150 775 1080 765 960 802 740 785 500 740 360Z" fill="url(#rim)" />
      <path d="M357 104L980 62 1345 92 725 135Z" fill="#5489db" />
      <path d="M725 135L1345 92 1487 438 870 485Z" fill="#2c62b0" />
      <path d="M870 485L1487 438 1491 1037 873 1080Z" fill="#3a72c3" />
      <path d="M873 1080L1491 1037 1400 1472 878 1508 790 1475Z" fill="#235aac" />
      <path d="M612 222Q720 225 785 290L870 400 916 450 950 610 915 880Q900 980 800 1070L765 990 802 740 785 500 740 360 660 265Z" fill="#9db9e6" fillOpacity=".13" />
      <path d="M888 830Q915 880 895 960Q865 1040 775 1080L770 1040Q850 990 888 830Z" fill="#a9c2ea" fillOpacity=".18" />
      <path d="M775 1050Q900 1030 1040 1052Q1130 1075 1190 1150L1250 1260 1262 1290 1245 1400 1200 1482 878 1508 790 1475 700 1505 735 1150Z" fill="#a9c2ea" fillOpacity=".17" />
      <path d="M738 1140Q900 1110 985 1150L1080 1215 1130 1290 1120 1308 1090 1290 1060 1212 920 1235 860 1280 720 1285Z" fill="#a9c2ea" fillOpacity=".13" />
      <path d="M735 1150L825 1160 845 1220M800 1350L920 1325 1090 1298M925 1325Q920 1370 900 1400" fill="none" stroke="#8aaade" strokeOpacity=".25" strokeWidth="3" />

      <path d={outline} fill="#a9a6a4" />
      {mesh.fills.map((d, i) => <path key={i} d={d} fill={shades[i]} />)}
      <path d="M530 507L715 463 712 540Z" fill="#98989a" />
      <path d="M628 423L715 463 530 507Z M380 365L590 302 628 423 455 470Z" fill="#b2afae" />
      <path d="M302 690L400 660 395 740 308 745Z" fill="#979493" />
      <path d="M395 490L422 585 345 600 362 555Z M320 565L345 600 303 640 303 610Z" fill="#fbfbf8" />
      <path d="M590 608L648 640 620 690Z M475 493L480 567 422 585Z" fill="#cac8c6" />
      <g clipPath="url(#headClip)">
        <path d="M430 1130L790 1130V1520H430Z" fill="url(#neck)" />
        <path d="M218 200H900V1520H305L280 1300 250 1050 205 900 205 600Z" fill="#6f9cd8" fillOpacity=".12" />
        <path d="M218 760H30V400L218 350Z" fill="#b08d66" fillOpacity=".2" />
      </g>
      <path d={mesh.coarse} fill="none" stroke="#17191f" strokeWidth="1.900" strokeLinejoin="round" />
      <path d={mesh.fine} fill="none" stroke="#15130f" strokeWidth="1.750" strokeLinejoin="round" />
      <g fill="none" stroke="#17191f" strokeWidth="1.900">
        <path d="M612 228L370 290 300 335M612 228L440 275 320 330M612 230L400 350 330 380M612 232L380 365M612 230L430 320 290 350M612 228L470 285 350 350 240 370M590 608L675 732M590 608L600 690M400 360L455 470M648 640L800 740M345 605Q420 600 470 625 520 660 600 690M300 640Q380 590 440 615" />
        <path d="M340 310L460 265M300 345L420 310M250 365L370 320M230 380L400 330M270 340L350 400M310 350L385 405M240 400L330 350M260 410L360 340M300 405L385 370M330 412L380 395" />
      </g>
      <g clipPath="url(#headClip)">
        <path d="M30 740L70 760Q105 830 105 915L95 990 105 1110 175 1250 185 1400 220 1470H100L20 1000Z" fill="#0e0d0c" filter="url(#soft)" />
        <path d="M50 770H195V900L200 960 150 1010 60 990Z" fill="#0e0d0c" fillOpacity=".7" filter="url(#soft)" />
        <path d="M205 800L265 900 310 1060 420 1120 460 1300 440 1450 340 1470 290 1200 240 1010Z" fill="#122440" fillOpacity=".42" filter="url(#soft)" />
        <path d="M215 870H270L280 960 250 1010 215 940Z" fill="#122440" fillOpacity=".6" filter="url(#soft)" />
        <path d="M440 800L520 700 640 720 600 800 520 850Z M700 780L800 760V900L760 1060 720 1000Z" fill="#122440" fillOpacity=".25" filter="url(#soft)" />
        <path d="M100 1130L240 1150 280 1460 180 1440Z" fill="#0e0d0c" fillOpacity=".25" filter="url(#soft)" />
        <path d="M218 200H900V1520H305L280 1300 250 1050 205 900 205 600Z" fill="#2f6ac4" fillOpacity=".12" />
        <path d="M172 1058L182 1048 190 1054 198 1044 202 1054 186 1062ZM458 970L480 965 476 988 462 992ZM205 1065L215 1062 212 1072ZM340 822L350 830 350 845Z" fill="#f3f3f3" />
      </g>
      <path d="M35 575L60 530 90 470 130 420 180 380 218 360 290 320 370 275 460 252 612 228M802 740L797 800 788 860M420 1508H698" fill="none" stroke="#1a1a1a" strokeWidth="3" />
      <path d="M40 580L70 530 110 450M50 585L80 545 120 480M60 570L100 500 160 410M75 600L105 580 130 600M90 600L130 610M100 480L200 390M120 450L215 375M85 560L150 460" fill="none" stroke="#111" strokeWidth="3.500" />
      <path d="M38 582L62 545M45 588L72 552" stroke="#111" strokeWidth="10" />

      <path d="M878 1440L930 1390 985 1365 1090 1300 1120 1312 1190 1265 1185 1238 1160 1215 1110 1195 1103 1175 1130 1153 1180 1160 1225 1205 1252 1260 1245 1340 1250 1410 1205 1482 878 1508Z" fill="#7093c8" stroke="#173566" strokeWidth="2.500" />
      <path d="M1140 1156L1180 1162 1215 1230 1215 1295 1185 1295 1190 1262 1185 1238 1160 1215Z" fill="#8fabd6" fillOpacity=".4" />
      <path d="M218 350L357 104 980 62 1345 92 1487 438 1491 1037 1400 1472 878 1508M357 104L725 135 1345 92M725 135L870 485 1487 438M870 485L873 1080 1491 1037M873 1080L790 1475" {...Edge} />
      <path d="M732 1515L780 1480 865 1443 875 1480 875 1522 740 1520Z" fill="#c3cbd6" stroke="#1a1a1a" strokeWidth="3" />
      <path d="M780 1516L865 1445M810 1520L870 1480M845 1455L875 1490M740 1515L865 1448" stroke="#1a1a1a" strokeWidth="2" />
    </svg>
  );
};

const ViewCube = () => (
  <svg width="138" height="117" viewBox="1220 360 300 350" preserveAspectRatio="none">
    <defs>
      <radialGradient id="cubeShadow"><stop offset="0" stopColor="#777" stopOpacity=".75" /><stop offset="1" stopColor="#999" stopOpacity="0" /></radialGradient>
      <linearGradient id="cubeFace" x1="0" y1="0" x2="0" y2="1"><stop offset="0" stopColor="#f6f6f6" /><stop offset="1" stopColor="#dedede" /></linearGradient>
    </defs>
    <ellipse cx="1355" cy="654" rx="130" ry="30" fill="url(#cubeShadow)" />
    <path d="M1258 449L1342 442V660L1258 636Z" fill="url(#cubeFace)" />
    <path d="M1342 442L1450 445V636L1342 660Z" fill="url(#cubeFace)" />
    <path d="M1324 484H1363V618H1324Z" fill="#cdd2d8" fillOpacity=".6" />
    <path d="M1258 449L1342 442 1450 445V636L1342 660 1258 636Z" fill="none" stroke="#8f8f8f" strokeWidth="3" strokeDasharray="20 7" />
    <path d="M1342 442V660" stroke="#777" strokeWidth="3" strokeDasharray="50 10" />
    <path d="M1256 420V636" stroke="#7b7bff" strokeWidth="5" />
    <path d="M1258 638L1360 674" stroke="#f08080" strokeWidth="7" />
    <g fontFamily="Liberation Sans" fontWeight="bold">
      <text x="1243" y="411" fontSize="58" fill="#8080ff" textLength="22" lengthAdjust="spacingAndGlyphs">Z</text>
      <text x="1363" y="698" fontSize="58" fill="#ff8a8a" textLength="22" lengthAdjust="spacingAndGlyphs">X</text>
      <text transform="translate(1269 562) skewY(9) scale(.31 1)" fontSize="56" fill="#909399">FRONT</text>
      <text transform="translate(1365 573) skewY(-7) scale(.39 1)" fontSize="58" fill="#909399">RIGHT</text>
    </g>
  </svg>
);

/* ---------- navigation bar ---------- */
const NavCaret = ({ l }: { l: number }) => (
  <Shift $l={l}><Glyph x={0} y={66} w={26} h={108}><path d="M0 111H26L16 128H10Z" fill="#3f3f3f" /></Glyph></Shift>
);
const Navigation = () => (
  <NavBar>
    <Glyph x={102} y={66} w={76} h={108}>
      <g fill="none" stroke="#4a4f57" strokeWidth="4.500">
        <path d="M124 140Q130 156 142 154Q150 148 152 138M124 100Q130 86 142 86Q150 92 150 102" />
        <path d="M118 108Q106 112 106 118Q108 126 118 128M122 138L126 102M132 130Q172 132 174 118Q174 110 160 106" />
      </g>
      <path d="M136 109V125M128 117H144" stroke="#2b7de0" strokeWidth="4" />
      <path d="M147 93V105M141 99H153M160 101V113M154 107H166" stroke="#4a4f57" strokeWidth="4" />
    </Glyph>
    <NavCaret l={7} />
    <Shift $l={8}>
      <Glyph x={250} y={66} w={76} h={108}>
        <path d="M256 106L280 88V98L308 90V106Z" fill="#b9bdc4" stroke="#4a4f57" strokeWidth="4" />
        <rect x="254" y="107" width="69" height="46" rx="3" fill="#eceef1" stroke="#4a4f57" strokeWidth="4" />
        <rect x="268" y="122" width="41" height="17" fill="#a6abb5" stroke="#4a4f57" strokeWidth="4" />
      </Glyph>
    </Shift>
    <Shift $l={14}>
      <Glyph x={368} y={66} w={76} h={108}>
        <path d="M371 122Q376 116 386 124L392 128L384 96Q386 88 393 93L401 115L400 90Q403 82 410 86L412 112L416 88Q420 82 426 88L424 116L431 98Q438 94 440 100L436 132Q432 154 416 154H402Q392 152 384 136Z" fill="#f4f5f7" stroke="#4a4f57" strokeWidth="4" />
        <path d="M401 113L403 120M412 110V120M424 114L422 121" stroke="#4a4f57" strokeWidth="4" />
      </Glyph>
    </Shift>
    <Shift $l={14}>
      <Glyph x={485} y={66} w={76} h={108}>
        <path d="M523 132L542 149" stroke="#33373d" strokeWidth="11" />
        <circle cx="509" cy="115" r="20" fill="#dceef2" stroke="#4a4f57" strokeWidth="4.500" /><circle cx="502" cy="108" r="8" fill="#fff" />
        <path d="M547 84V104M537 94H557M537 112H557" stroke="#33373d" strokeWidth="4" />
      </Glyph>
    </Shift>
    <Shift $l={14}>
      <Glyph x={602} y={66} w={78} h={108}>
        <rect x="605" y="86" width="69" height="67" fill="none" stroke="#4a4f57" strokeWidth="4" strokeDasharray="10 8" />
        <path d="M650 130L674 152" stroke="#33373d" strokeWidth="12" />
        <circle cx="633" cy="113" r="27" fill="#d3eaee" stroke="#4a4f57" strokeWidth="4.500" /><circle cx="624" cy="104" r="12" fill="#fff" fillOpacity=".8" />
      </Glyph>
    </Shift>
    <NavCaret l={6} />
    <Shift $l={20.5}>
      <Glyph x={787} y={66} w={76} h={108}>
        <rect x="790" y="86" width="69" height="54" rx="3" fill="#e3e5e9" stroke="#4a4f57" strokeWidth="4" />
        <rect x="800" y="95" width="50" height="36" fill="#8fb4e3" stroke="#3c6fb5" strokeWidth="4" />
        <path d="M814 141L809 153H839L834 141Z" fill="#d5d8dd" stroke="#4a4f57" strokeWidth="4" />
      </Glyph>
    </Shift>
    <NavCaret l={2.5} />
    <Shift $l={10}>
      <Glyph x={926} y={66} w={76} h={108}>
        <rect x="930" y="86" width="69" height="68" fill="url(#steel)" stroke="#4a4f57" strokeWidth="4" />
        <path d="M942 88V152M955 88V152M968 88V152M981 88V152M930 98H998M930 111H998M930 124H998M930 137H998" stroke="#666b73" strokeWidth="3" />
      </Glyph>
    </Shift>
    <NavCaret l={2.5} />
    <Shift $l={10}>
      <Glyph x={1066} y={66} w={72} h={108}>
        {[[1069, 89], [1103, 89], [1069, 119], [1103, 119]].map(([x, y]) => (
          <g key={`${x}-${y}`}><rect x={x} y={y} width="32" height="27" fill="#8fb0de" stroke="#35568c" strokeWidth="3.500" /><rect x={x + 9} y={y + 9} width="14" height="9" fill="none" stroke="#c6dbf5" strokeWidth="3" /></g>
        ))}
      </Glyph>
    </Shift>
    <NavCaret l={4} />
  </NavBar>
);

const Disc = ({ sign }: { sign: "minus" | "plus" }) => (
  <svg width="14" height="14" viewBox="0 0 14 14"><circle cx="7" cy="7" r="7" fill="#303030" /><path d={sign === "minus" ? "M3.500 7H10.500" : "M3.500 7H10.500M7 3.500V10.500"} stroke="#fff" strokeWidth="1.500" /></svg>
);
const Pointer = () => (
  <svg width="16" height="24" viewBox="0 0 48 72"><path d="M3 2V56L15 46L25 69L36 64L27 44L45 41Z" fill="#e3e6ea" stroke="#565a61" strokeWidth="4" /></svg>
);

export default function App() {
  return (
    <Desktop>
      <Global />
      <Defs />
      <BackTitle><svg width="14" height="21" viewBox="0 0 14 21"><path d="M0 8L9 0H14V21L3 16Z" fill="#7d83b4" /><path d="M0 8L9 0 14 8 6 12Z" fill="#a9aed4" /></svg></BackTitle>
      <BackMenu />
      <BackRule />
      <BackBody>
        <BackSide>
          <svg width="60" height="36" viewBox="0 0 60 36">
            <rect x="1" width="57" height="34" fill="#8b8987" /><rect x="1" width="12" height="34" fill="#5b5958" />
            <rect x="14" y="2" width="39" height="30" fill="#dcdad9" /><path d="M14 7L53 10V13L14 11Z" fill="#4f4b4a" />
            <path d="M31 12H41L37 17Z" fill="#4f4b4a" /><path d="M15 32V28L53 25V32Z" fill="#c2bfbd" />
            <path d="M22 21Q32 17 42 21Q43 27 37 32H28Q21 27 22 21Z" fill="#2a9fd8" /><path d="M22 22H42M24 27H41" stroke="#bfe6f8" strokeWidth="1.200" />
          </svg>
        </BackSide>
        <BackDivider />
        <BackView>
          <BackStrip />
          <Stats>vertices: 4637 triangles: 9266</Stats>
        </BackView>
      </BackBody>

      <Window>
        <TitleBar>
          <svg width="24" height="24" viewBox="0 0 24 24">
            <rect width="24" height="24" fill="#fbe3cf" /><path d="M7 2H18V7H12V10H17V14H12V19H7Z" fill="#d9792b" /><path d="M7 2H9V19H7Z" fill="#a9541a" /><path d="M13 19H20V22H15Z" fill="#f3b27c" />
          </svg>
          <TitleText>Autodesk Fusion 360 (Education License)</TitleText>
          <Controls>
            <svg width="15" height="16" viewBox="0 0 15 16"><path d="M0 7.500H15" stroke="#000" strokeWidth="1.200" /></svg>
            <svg width="15" height="16" viewBox="0 0 15 16"><rect x=".5" y=".5" width="14" height="14.500" fill="none" stroke="#000" strokeWidth="1.200" /></svg>
            <svg width="16" height="16" viewBox="0 0 16 16"><path d="M.5.5L15.500 15.500M15.500.5L.5 15.500" stroke="#000" strokeWidth="1.200" /></svg>
          </Controls>
        </TitleBar>

        <TabBar>
          <QuickIcons />
          <Tab $active><Pane /><TabTitle>siwei_dimensions_justhead_back v1*</TabTitle><Close /></Tab>
          <Tab><Pane faded /><TabTitle>siwei_dimensions_justhead_front v1*</TabTitle><Close c="#888" /></Tab>
          <NewTab><svg width="20" height="20" viewBox="0 0 20 20"><path d="M10 0V20M0 10H20" stroke="#777" strokeWidth="5" /></svg></NewTab>
          <Account>
            <svg width="25" height="25" viewBox="0 0 25 25"><circle cx="12.500" cy="12.500" r="11" fill="#cacaca" stroke="#666" strokeWidth="2" /><circle cx="12.500" cy="12.500" r="8.500" fill="#5c5c5c" /><path d="M12.500 7V13.500H17.500" stroke="#d5d5d5" strokeWidth="2.200" fill="none" /></svg>
            <span>ds3628</span>
            <svg width="25" height="25" viewBox="0 0 25 25"><circle cx="12.500" cy="12.500" r="12" fill="#575757" /><path d="M8.500 9.500Q8.700 5.800 12.600 5.800Q16.500 6 16.500 9.200Q16.500 11 14 12.500Q12.600 13.400 12.600 15.300" stroke="#d5d5d5" strokeWidth="2.800" fill="none" /><rect x="11.200" y="17" width="2.900" height="2.900" fill="#d5d5d5" /></svg>
          </Account>
        </TabBar>

        <Ribbon>
          <Workspace><Grip /><ModelLabel>MODEL</ModelLabel><ModelCaret><Caret /></ModelCaret></Workspace>
          {groups.map((g) => (
            <Group key={g.label} $w={g.w}>
              <IconRow $l={g.il} $gap={g.gap}>{g.icons}</IconRow>
              <GroupLabel $l={g.ll} $sp={g.sp}>{g.label}<Caret /></GroupLabel>
            </Group>
          ))}
        </Ribbon>

        <Canvas>
          <ModelLayer><Model /></ModelLayer>
          <CubeLayer><ViewCube /></CubeLayer>
          <Left>
            <PanelBar $h={37}>
              <svg width="16" height="10" viewBox="0 0 16 10"><path d="M8 0V10L0 5ZM16 0V10L8 5Z" fill="#333" /></svg>
              <PanelTitle $l={14} $sp={-0.6}>BROWSER</PanelTitle>
              <Disc sign="minus" /><Handle />
            </PanelBar>
            <TreeArea>
              <Track><Thumb /></Track>
              <Tree>{nodes.map((n) => <TreeRow key={n.text} n={n} />)}</Tree>
            </TreeArea>
            <PanelBar $h={38} $open>
              <PanelTitle $l={30} $sp={-0.95}>COMMENTS</PanelTitle>
              <Disc sign="plus" /><Handle />
            </PanelBar>
          </Left>
          <Navigation />
          <Right>
            <Dialog>
              <DialogHead>
                <svg width="15" height="17" viewBox="0 0 15 17"><path d="M1 3V14" stroke="#999" /><path d="M4 0V17" stroke="#777" strokeWidth="1.500" /></svg>
                <Disc sign="minus" />
                <PanelTitle $l={5} $sp={-0.95}>COMBINE</PanelTitle>
                <svg width="16" height="10" viewBox="0 0 16 10"><path d="M0 0V10L8 5ZM8 0V10L16 5Z" fill="#333" /></svg>
              </DialogHead>
              <Form>
                <Field><FieldLabel>Target Body</FieldLabel><Picker><Pointer />1 selected</Picker><Close s={14} c="#5d5d5d" w={2.6} /></Field>
                <Field><FieldLabel>Tool Bodies</FieldLabel><Picker $on><Pointer />1 selected</Picker><Close s={14} c="#5d5d5d" w={2.6} /></Field>
                <Field>
                  <FieldLabel>Operation</FieldLabel>
                  <Select>
                    <I><path d="M2 30H70V70H2Z" fill="#5b97d0" stroke="#111" strokeWidth="4" /><rect x="14" y="2" width="43" height="46" fill="#fff" stroke="#111" strokeWidth="4" /><path d="M16 30H55" stroke="#bbb" strokeWidth="2" /></I>
                    <SelectText>Cut</SelectText><Caret />
                  </Select>
                </Field>
                <Field><FieldLabel>New Component</FieldLabel><Check /></Field>
                <Field><FieldLabel>Keep Tools</FieldLabel><Check /></Field>
              </Form>
              <DialogFoot>
                <svg width="19" height="19" viewBox="0 0 19 19"><circle cx="9.500" cy="9.500" r="9.500" fill="#000" /><path d="M8 3.800H11V6H8ZM7 7.500H11V13.500H12.200V15H6.800V13.500H8V9H7Z" fill="#fff" /></svg>
                <FootGap $w={130} />
                <Button $off>OK</Button>
                <FootGap $w={15} />
                <Button>Cancel</Button>
              </DialogFoot>
            </Dialog>
            <Progress />
          </Right>
        </Canvas>
      </Window>
    </Desktop>
  );
}
